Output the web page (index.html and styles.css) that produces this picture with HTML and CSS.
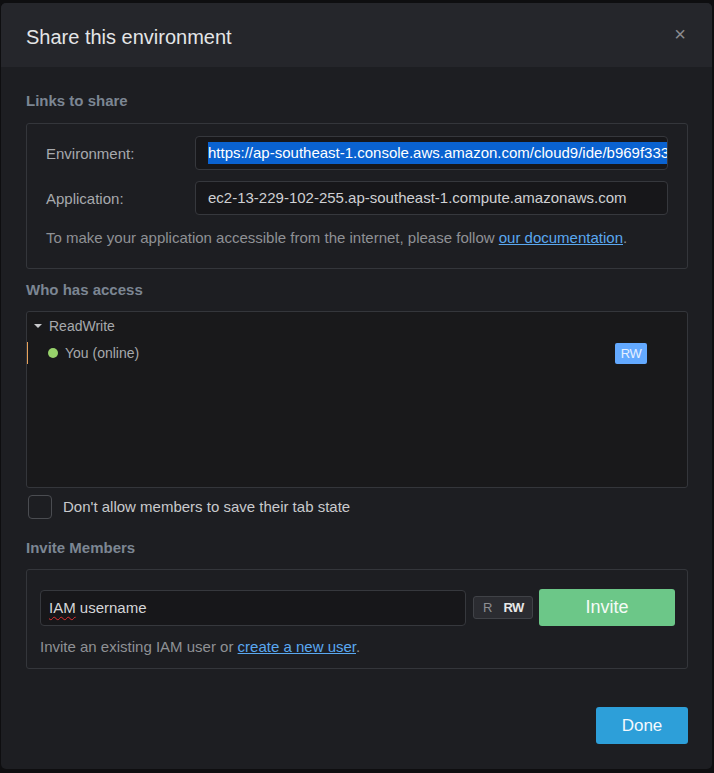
FILE: index.html
```html
<!DOCTYPE html>
<html>
<head>
<meta charset="utf-8">
<link rel="stylesheet" href="styles.css">
</head>
<body>
<div class="modal">
  <div class="modal-header">
    <h1 class="title">Share this environment</h1>
    <span class="close">×</span>
  </div>
  <div class="modal-body">
    <h2 class="section-title first">Links to share</h2>
    <div class="panel links">
      <div class="link-row">
        <span class="link-label">Environment:</span>
        <div class="field url-field"><span class="selected">https://ap-southeast-1.console.aws.amazon.com/cloud9/ide/b969f333</span></div>
      </div>
      <div class="link-row">
        <span class="link-label">Application:</span>
        <div class="field">ec2-13-229-102-255.ap-southeast-1.compute.amazonaws.com</div>
      </div>
      <p class="hint">To make your application accessible from the internet, please follow <a href="#" class="link">our documentation</a>.</p>
    </div>

    <h2 class="section-title access-title">Who has access</h2>
    <div class="panel access">
      <div class="group-row"><span class="caret"></span>ReadWrite</div>
      <div class="member-row">
        <span class="dot"></span>
        <span class="member-name">You (online)</span>
        <span class="badge">RW</span>
      </div>
    </div>

    <label class="check-row">
      <span class="checkbox"></span>
      <span>Don't allow members to save their tab state</span>
    </label>

    <h2 class="section-title invite-title">Invite Members</h2>
    <div class="panel invite">
      <div class="invite-row">
        <div class="field user-field"><span class="squiggle">IAM</span> username</div>
        <div class="toggle"><span class="t-r">R</span><span class="t-rw">RW</span></div>
        <button class="btn-invite">Invite</button>
      </div>
      <p class="hint invite-hint">Invite an existing IAM user or <a href="#" class="link">create a new user</a>.</p>
    </div>

    <div class="footer">
      <button class="btn-done">Done</button>
    </div>
  </div>
</div>
</body>
</html>
```
FILE: styles.css
```css
* { box-sizing: border-box; }
html, body { margin: 0; padding: 0; }
body {
  background: #0e0e10;
  font-family: "Liberation Sans", Arial, sans-serif;
  width: 714px;
  height: 773px;
  overflow: hidden;
}
.modal {
  margin: 3px 0 0 1px;
  width: 711px;
  height: 766px;
  background: #1d1e22;
  border-radius: 5px;
  overflow: hidden;
}
.modal-header {
  height: 64px;
  background: #25262b;
  display: flex;
  align-items: center;
  justify-content: space-between;
  padding: 5px 26px 0 25px;
}
.title {
  margin: 0;
  font-weight: normal;
  font-size: 20px;
  color: #e4e5e7;
}
.close {
  color: #8a8b8f;
  font-size: 20px;
  margin-top: -6px;
}
.modal-body {
  padding: 0 25px 0 25px;
}
.section-title {
  margin: 0;
  font-size: 15px;
  font-weight: bold;
  color: #7c8693;
  height: 16px;
  line-height: 16px;
}
.section-title.first { margin-top: 26px; }
.panel {
  border: 1px solid #34363b;
  border-radius: 3px;
  width: 662px;
}
.links {
  margin-top: 14px;
  height: 146px;
  padding: 12px 19px 0 19px;
}
.link-row {
  display: flex;
  align-items: center;
  margin-bottom: 11px;
}
.link-label {
  width: 149px;
  font-size: 15px;
  color: #a7a9ad;
}
.field {
  flex: 1;
  height: 34px;
  background: #17171a;
  border: 1px solid #36383d;
  border-radius: 4px;
  padding: 0 12px;
  line-height: 32px;
  font-size: 15px;
  color: #cfd0d3;
  white-space: nowrap;
  overflow: hidden;
}
.url-field { padding-right: 0; }
.selected {
  background: #0a62d0;
  color: #ffffff;
  padding: 2px 0 3px;
}
.hint {
  margin: 14px 0 0 0;
  font-size: 15px;
  color: #8f9195;
}
.link {
  color: #5aa8f0;
  text-decoration: underline;
}
.section-title.access-title { margin-top: 13px; }
.access {
  margin-top: 13px;
  height: 177px;
  background: #19191b;
  padding-top: 6px;
}
.group-row {
  display: flex;
  align-items: center;
  height: 16px;
  font-size: 14px;
  color: #a7a9ad;
  padding-left: 7px;
}
.caret {
  width: 0;
  height: 0;
  border-left: 4px solid transparent;
  border-right: 4px solid transparent;
  border-top: 4px solid #c8c9cc;
  margin-right: 7px;
}
.member-row {
  display: flex;
  align-items: center;
  height: 22px;
  margin-top: 8px;
  border-left: 1px solid #e8a25a;
  padding-left: 20px;
  padding-right: 40px;
}
.dot {
  width: 10px;
  height: 10px;
  border-radius: 50%;
  background: #97d26b;
  margin-right: 7px;
}
.member-name {
  flex: 1;
  font-size: 14px;
  color: #a7a9ad;
}
.badge {
  width: 32px;
  height: 21px;
  background: #63a9ff;
  color: #e6f0ff;
  font-size: 13px;
  border-radius: 2px;
  text-align: center;
  line-height: 21px;
  letter-spacing: -0.5px;
}
.check-row {
  display: flex;
  align-items: center;
  margin-top: 6px;
  margin-left: 2px;
  height: 25px;
  font-size: 15px;
  color: #c9cacd;
}
.checkbox {
  width: 24px;
  height: 24px;
  border: 1px solid #4a4c51;
  border-radius: 4px;
  margin-right: 11px;
}
.section-title.invite-title { margin-top: 21px; }
.invite {
  margin-top: 13px;
  height: 100px;
  padding: 19px 12px 0 13px;
}
.invite-row {
  display: flex;
  align-items: center;
}
.user-field {
  flex: none;
  width: 426px;
  height: 36px;
  line-height: 34px;
  font-size: 15px;
  color: #d5d6d8;
  padding: 0 8px;
}
.squiggle {
  text-decoration: underline wavy #e03030;
  text-decoration-thickness: 1px;
  text-underline-offset: 3px;
}
.toggle {
  margin-left: 7px;
  width: 60px;
  height: 23px;
  border: 1px solid #404247;
  background: #2b2c31;
  border-radius: 3px;
  display: flex;
  align-items: center;
  font-size: 13px;
}
.t-r { color: #8d8f93; margin-left: 9px; }
.t-rw { color: #e8e8e8; font-weight: bold; margin-left: 11px; letter-spacing: -0.5px; }
.btn-invite {
  margin-left: 6px;
  width: 136px;
  height: 37px;
  border: none;
  border-radius: 3px;
  background: #6cc788;
  color: #f4fbf6;
  font-family: inherit;
  font-size: 18px;
}
.invite-hint {
  margin-top: 12px;
  color: #8f9195;
}
.footer {
  display: flex;
  justify-content: flex-end;
  margin-top: 38px;
}
.btn-done {
  width: 92px;
  height: 37px;
  border: none;
  border-radius: 3px;
  background: #2d9fd9;
  color: #f4f9fd;
  font-family: inherit;
  font-size: 17px;
  margin-right: -1px;
}
```
